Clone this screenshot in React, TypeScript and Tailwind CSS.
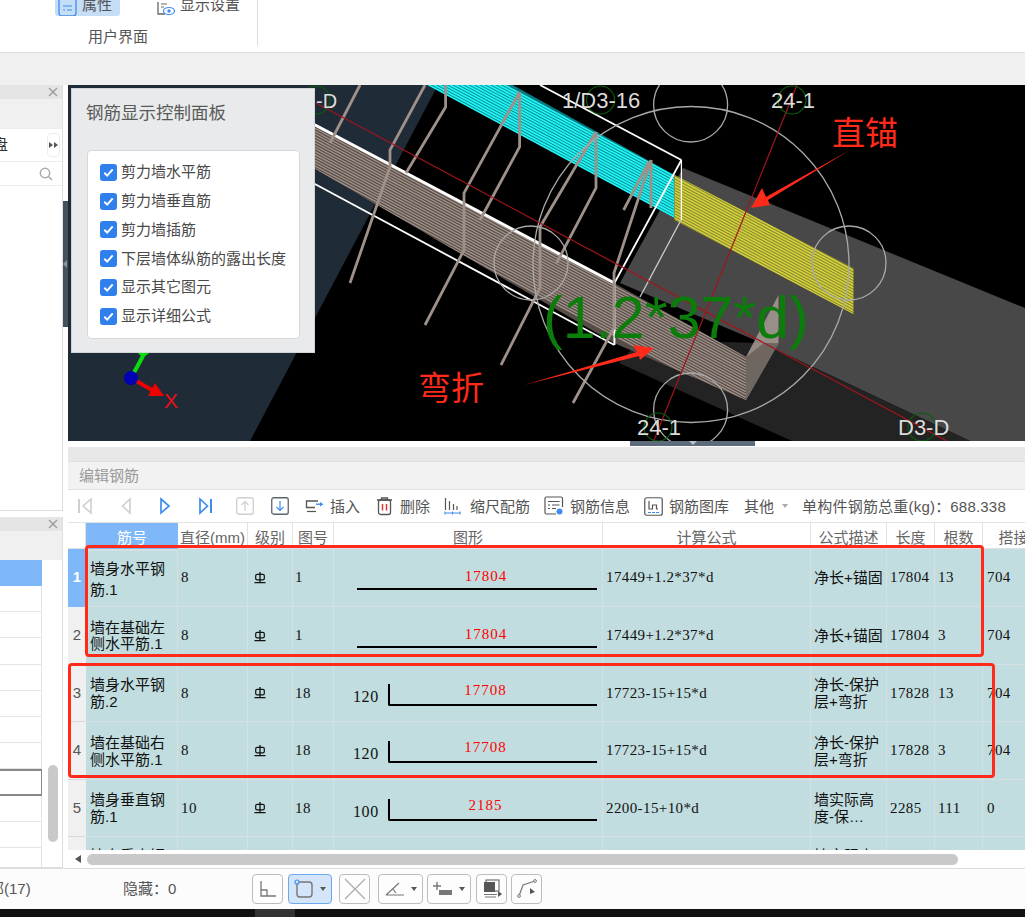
import React from "react";

const SANS = "font-['Liberation_Sans','Noto_Sans_CJK_SC',sans-serif]";
const NUM = "font-['Liberation_Serif','Noto_Sans_CJK_SC',serif]";

function range(n: number) {
  return Array.from({ length: n }, (_, i) => i);
}

function Scene() {
  const slope = 0.537;
  const hatch = (x1: number, x2: number, y1: number, n: number, step: number, color: string, w: number) =>
    range(n).map((i) => (
      <line
        key={i}
        x1={x1}
        y1={y1 + i * step}
        x2={x2}
        y2={y1 + i * step + (x2 - x1) * slope}
        stroke={color}
        strokeWidth={w}
      />
    ));
  const stirrups = [
    "360,85 330,143",
    "425,85 390,150 390,167 350,283",
    "445.6,85 445.6,107 406,173",
    "519.6,92 464,193 464,250 425,325",
    "519.6,92 519.6,147 480,220",
    "596,132 540,227 540,288 501,365",
    "596,132 596,188 556.6,263",
    "651,160 614,273 614,328 573,403",
    "651,160 651,208",
    "623.6,210 649,162",
  ];
  const greenCircles = [
    [316, 100],
    [600.5, 100],
    [792, 100],
    [658, 427],
    [922, 427],
  ];
  const grayCircles = [
    [690.6, 105],
    [690.6, 410],
    [531, 263],
    [849, 263],
  ];
  return (
    <svg viewBox="68 85 957 356" className="block w-full h-full" xmlns="http://www.w3.org/2000/svg">
      <rect x="68" y="85" width="957" height="356" fill="#000" />
      <polygon points="68,85 438,85 250,441 68,441" fill="#1f2b37" />
      <polygon points="683,168 1025,308 1025,441 970,441 762,343 620,283" fill="#484848" />
      <polygon points="619,363 792,441 970,441 762,343 640,340" fill="#232323" />

      {/* cyan bars */}
      <clipPath id="cyanClip">
        <polygon points="512.7,85 674.5,175 674.5,218 427,85" />
      </clipPath>
      <g clipPath="url(#cyanClip)">
        <rect x="420" y="85" width="260" height="140" fill="#067a80" />
        {hatch(400, 680, 29, 40, 2.9, "#22f4f4", 1.8)}
      </g>

      {/* yellow bars */}
      <clipPath id="yellowClip">
        <polygon points="674.5,175 853.4,268 853.4,314 674.5,220" />
      </clipPath>
      <g clipPath="url(#yellowClip)">
        <rect x="670" y="170" width="190" height="150" fill="#807e2e" />
        {hatch(670, 860, 172, 18, 2.9, "#d2d03c", 1.7)}
      </g>

      {/* brown bars */}
      <clipPath id="brownClip">
        <polygon points="300,117 614,283 746,357 746,400 614,343 300,160" />
      </clipPath>
      <g clipPath="url(#brownClip)">
        <rect x="300" y="110" width="450" height="295" fill="#564c48" />
        {hatch(290, 760, 112, 18, 2.9, "#a09188", 1.4)}
      </g>
      <polygon points="746,357 778.5,295 778.5,343 746,400" fill="#a89c95" opacity="0.85" />
      <polygon points="746,357 764,343 778.5,343 746,400" fill="#6f6660" />

      {/* wire box */}
      <g fill="none" stroke="#fff">
        <line x1="540" y1="85" x2="681.4" y2="160" strokeWidth="1.8" />
        <line x1="681.4" y1="160" x2="614.4" y2="283" strokeWidth="1.8" />
        <line x1="300" y1="117" x2="614.4" y2="283" strokeWidth="3" />
        <line x1="300" y1="176" x2="614.4" y2="345" strokeWidth="1.8" />
        <line x1="614.4" y1="283" x2="614.4" y2="345" strokeWidth="2" />
        <line x1="681" y1="220" x2="640" y2="297" strokeWidth="1.3" stroke="#ccc" />
        <line x1="681.4" y1="160" x2="681.4" y2="220" strokeWidth="1.3" />
      </g>

      {/* stirrups */}
      <g fill="none" stroke="#9f9189" strokeWidth="2.8">
        {stirrups.map((p) => (
          <polyline key={p} points={p} />
        ))}
      </g>

      {/* circles */}
      <g fill="none" stroke="#a9a9a9" strokeWidth="1.3">
        <circle cx="691" cy="264.5" r="158" />
        {grayCircles.map(([x, y]) => (
          <circle key={x + "-" + y} cx={x} cy={y} r="37" />
        ))}
      </g>

      {/* axes */}
      <line x1="316" y1="103" x2="947" y2="441" stroke="#a3151c" strokeWidth="1.2" />
      <line x1="797" y1="85" x2="653.7" y2="441" stroke="#a3151c" strokeWidth="1.2" />

      <g fill="none" stroke="#0b5d0b" strokeWidth="1.2">
        {greenCircles.map(([x, y]) => (
          <circle key={x + "-" + y} cx={x} cy={y} r="14" />
        ))}
      </g>

      <g fill="#dcdcdc" fontFamily="'Liberation Sans', sans-serif" fontSize="22">
        <text x="316" y="108" fontSize="20">-D</text>
        <text x="562" y="108">1/D3-16</text>
        <text x="771" y="108">24-1</text>
        <text x="637" y="435">24-1</text>
        <text x="898" y="435">D3-D</text>
      </g>

      <text x="543" y="338" fill="#0a7d0a" fontFamily="'Liberation Sans', sans-serif" fontSize="59">
        (1.2*37*d)
      </text>

      {/* red arrows */}
      <polygon points="850,150 766,197 762,188 751,208 770,205 768,200" fill="#ff2a1a" />
      <polygon points="524,385 637,352 633,345 654,348 640,360 639,356" fill="#ff2a1a" />
      <g fill="#ff2a1a" fontFamily="'Noto Sans CJK SC', sans-serif" fontSize="33">
        <text x="832" y="145">直锚</text>
        <text x="418" y="400">弯折</text>
      </g>

      {/* coordinate triad */}
      <line x1="131" y1="378" x2="143" y2="356" stroke="#0bdc0b" strokeWidth="4" />
      <polygon points="138,353 149,353 143,358" fill="#0bdc0b" />
      <line x1="131" y1="378" x2="152" y2="390" stroke="#f00000" strokeWidth="4" />
      <polygon points="148,396 155,383 164,396" fill="#f00000" />
      <circle cx="131" cy="378" r="7" fill="#0000b4" />
      <text x="164" y="408" fill="#e81018" fontFamily="'Liberation Sans', sans-serif" fontSize="21">X</text>
    </svg>
  );
}

function Check() {
  return (
    <span className="w-[17px] h-[17px] rounded-[3px] bg-[#2f80ed] flex items-center justify-center shrink-0">
      <svg width="13" height="13" viewBox="0 0 13 13">
        <path d="M2.3 6.8 L5.2 9.6 L10.7 3.4" fill="none" stroke="#fff" strokeWidth="2" />
      </svg>
    </span>
  );
}

function ControlPanel() {
  const items = ["剪力墙水平筋", "剪力墙垂直筋", "剪力墙插筋", "下层墙体纵筋的露出长度", "显示其它图元", "显示详细公式"];
  return (
    <div className="absolute left-[3px] top-[3px] w-[244px] h-[265px] bg-[#e8eaeb] border border-[#d2d4d5] pl-[14px]">
      <div className="text-[17.5px] leading-[24px] text-[#5a5a5a] pt-[12px] h-[61px]">钢筋显示控制面板</div>
      <div className="ml-[1px] w-[213px] h-[189px] bg-white border border-[#d8d8d8] rounded-[4px] pt-[7px] pl-[12px]">
        {items.map((t) => (
          <div key={t} className="flex items-center h-[28.8px] gap-[4px] text-[15px] text-[#4a4a4a]">
            <Check />
            <span>{t}</span>
          </div>
        ))}
      </div>
    </div>
  );
}

function NavIcon({ kind }: { kind: number }) {
  const gray = "#cfcfcf";
  const blue = "#3f8cf0";
  if (kind === 0)
    return (
      <svg width="14" height="18" viewBox="0 0 14 18" className="ml-[10px]">
        <path d="M1 2V16" stroke={gray} strokeWidth="2" />
        <path d="M13 2 L5 9 L13 16Z" fill="none" stroke={gray} strokeWidth="1.6" />
      </svg>
    );
  if (kind === 1)
    return (
      <svg width="10" height="18" viewBox="0 0 10 18" className="ml-[29px]">
        <path d="M9 2 L1.5 9 L9 16Z" fill="none" stroke={gray} strokeWidth="1.6" />
      </svg>
    );
  if (kind === 2)
    return (
      <svg width="10" height="18" viewBox="0 0 10 18" className="ml-[29px]">
        <path d="M1 2 L9 9 L1 16Z" fill="none" stroke={blue} strokeWidth="1.7" />
      </svg>
    );
  return (
    <svg width="13" height="18" viewBox="0 0 13 18" className="ml-[29px]">
      <path d="M1 2 L8.5 9 L1 16Z" fill="none" stroke={blue} strokeWidth="1.7" />
      <path d="M12 2V16" stroke={blue} strokeWidth="2" />
    </svg>
  );
}

function Toolbar() {
  const label = "text-[15px] leading-[20px] text-[#555] whitespace-nowrap mt-[2px]";
  return (
    <div className="h-[33px] bg-white flex items-center border-b border-[#e2e2e2]">
      <NavIcon kind={0} />
      <NavIcon kind={1} />
      <NavIcon kind={2} />
      <NavIcon kind={3} />
      <svg width="18" height="18" viewBox="0 0 18 18" className="ml-[24px]">
        <rect x="0.75" y="0.75" width="16.5" height="16.5" rx="2" fill="none" stroke="#cfcfcf" strokeWidth="1.3" />
        <path d="M9 14V4.5M5.5 8 L9 4.5 L12.5 8" fill="none" stroke="#cfcfcf" strokeWidth="1.2" />
      </svg>
      <svg width="18" height="18" viewBox="0 0 18 18" className="ml-[17px]">
        <rect x="0.75" y="0.75" width="16.5" height="16.5" rx="2" fill="none" stroke="#5c6470" strokeWidth="1.3" />
        <path d="M9 4V13.5M5.5 10 L9 13.5 L12.5 10" fill="none" stroke="#3f8cf0" strokeWidth="1.2" />
      </svg>
      <svg width="19" height="16" viewBox="0 0 19 16" className="ml-[16px]">
        <path d="M13 3H1.5V9.5H10" fill="none" stroke="#555" strokeWidth="1.3" />
        <path d="M2 13.5H11" stroke="#555" strokeWidth="1.2" />
        <path d="M11 6.2H15" stroke="#3f8cf0" strokeWidth="1.4" />
        <path d="M15 4L18.5 6.2L15 8.4Z" fill="#3f8cf0" />
      </svg>
      <span className={label + " ml-[6px]"}>插入</span>
      <svg width="17" height="20" viewBox="0 0 17 20" className="ml-[16px]">
        <path d="M1 4H16M5.5 4V2H11.5V4" fill="none" stroke="#555" strokeWidth="1.3" />
        <rect x="2.5" y="4" width="12" height="14.5" rx="2" fill="none" stroke="#555" strokeWidth="1.3" />
        <path d="M6.5 8V14.5M10.5 8V14.5" stroke="#e53935" strokeWidth="1.5" />
      </svg>
      <span className={label + " ml-[7px]"}>删除</span>
      <svg width="17" height="20" viewBox="0 0 17 20" className="ml-[14px]">
        <path d="M1.5 2V14M5.5 5V14M9.5 8V14M13 10V14" stroke="#555" strokeWidth="1.2" />
        <path d="M0.5 17H16.5M1 15.5V18.5M8.5 15.5V18.5M16 15.5V18.5" stroke="#3f8cf0" strokeWidth="1.1" />
      </svg>
      <span className={label + " ml-[9px]"}>缩尺配筋</span>
      <svg width="20" height="20" viewBox="0 0 20 20" className="ml-[14px]">
        <path d="M12 18H2.5A1.5 1.5 0 0 1 1 16.5V2.5A1.5 1.5 0 0 1 2.5 1H17A1.5 1.5 0 0 1 18.5 2.5V11" fill="none" stroke="#555" strokeWidth="1.2" />
        <path d="M4 5.5H15.5M4 9H6M8 9H15.5M4 12.5H6M8 12.5H12" stroke="#555" strokeWidth="1.1" />
        <circle cx="15.5" cy="15.5" r="3" fill="#3f8cf0" />
      </svg>
      <span className={label + " ml-[6px]"}>钢筋信息</span>
      <svg width="19" height="19" viewBox="0 0 19 19" className="ml-[14px]">
        <rect x="0.75" y="0.75" width="17.5" height="17.5" rx="2" fill="none" stroke="#555" strokeWidth="1.2" />
        <path d="M5 4V12H8.5V8H12.5V12H14" fill="none" stroke="#555" strokeWidth="1.2" />
        <path d="M4 15.5H15" stroke="#3f8cf0" strokeWidth="1.2" strokeDasharray="3 1" />
      </svg>
      <span className={label + " ml-[6px]"}>钢筋图库</span>
      <span className={label + " ml-[15px]"}>其他</span>
      <svg width="6" height="4" viewBox="0 0 6 4" className="ml-[8px]">
        <path d="M0 0H6L3 4Z" fill="#aaa" />
      </svg>
      <span className={label + " ml-[14px] tracking-[0.2px]"}>单构件钢筋总重(kg)：688.338</span>
    </div>
  );
}

function HrbSymbol() {
  return (
    <svg width="12" height="12" viewBox="0 0 12 12" className="block">
      <rect x="1.7" y="2.4" width="8.6" height="5.4" rx="1.4" fill="none" stroke="#111" strokeWidth="1.2" />
      <path d="M6 0V10.6M0.5 10.6H11.5" stroke="#111" strokeWidth="1.3" />
    </svg>
  );
}

const GRID =
  "grid grid-cols-[18px_92px_70px_45px_41px_269px_208px_76px_48px_48px_62px] w-[977px]";
const CELL = "border-r border-b border-[#d7e0e0] flex items-center overflow-hidden";

type Row = {
  n: string;
  h: string;
  lh: string;
  name: string[];
  d: string;
  fig: string;
  bend: string;
  num: string;
  formula: string;
  desc: string[];
  len: string;
  count: string;
  lap: string;
};

const rows: Row[] = [
  { n: "1", h: "h-[58px]", lh: "leading-[21px]", name: ["墙身水平钢", "筋.1"], d: "8", fig: "1", bend: "", num: "17804", formula: "17449+1.2*37*d", desc: ["净长+锚固"], len: "17804", count: "13", lap: "704" },
  { n: "2", h: "h-[58px]", lh: "leading-[16px]", name: ["墙在基础左", "侧水平筋.1"], d: "8", fig: "1", bend: "", num: "17804", formula: "17449+1.2*37*d", desc: ["净长+锚固"], len: "17804", count: "3", lap: "704" },
  { n: "3", h: "h-[57px]", lh: "leading-[17px]", name: ["墙身水平钢", "筋.2"], d: "8", fig: "18", bend: "120", num: "17708", formula: "17723-15+15*d", desc: ["净长-保护", "层+弯折"], len: "17828", count: "13", lap: "704" },
  { n: "4", h: "h-[58px]", lh: "leading-[17px]", name: ["墙在基础右", "侧水平筋.1"], d: "8", fig: "18", bend: "120", num: "17708", formula: "17723-15+15*d", desc: ["净长-保护", "层+弯折"], len: "17828", count: "3", lap: "704" },
  { n: "5", h: "h-[57px]", lh: "leading-[17px]", name: ["墙身垂直钢", "筋.1"], d: "10", fig: "18", bend: "100", num: "2185", formula: "2200-15+10*d", desc: ["墙实际高", "度-保…"], len: "2285", count: "111", lap: "0" },
  { n: "6", h: "h-[58px]", lh: "leading-[21px]", name: ["墙身垂直钢", "筋.2"], d: "10", fig: "18", bend: "100", num: "2185", formula: "2200-15+10*d", desc: ["墙实际高", "度-保…"], len: "2285", count: "111", lap: "0" },
];

function Figure({ r }: { r: Row }) {
  const red = NUM + " text-[15px] leading-[16px] tracking-[1px] text-[#ff0000] text-center";
  if (!r.bend) {
    return (
      <div className="w-full pl-[23px] pr-[5px] pt-[2px]">
        <div className={red + " pl-[18px]"}>{r.num}</div>
        <div className="h-[2px] bg-black mt-[4px]" />
      </div>
    );
  }
  return (
    <div className="w-full flex items-end pl-[19px] pr-[5px] pt-[3px]">
      <span className={NUM + " text-[16px] leading-[18px] tracking-[0.6px] text-[#111] w-[35px] shrink-0"}>{r.bend}</span>
      <div className="flex-1 h-[22px] border-l-2 border-b-2 border-black rounded-bl-[2px]">
        <div className={red + " -mt-[2px] pr-[16px]"}>{r.num}</div>
      </div>
    </div>
  );
}

function Table() {
  const numCell = NUM + " text-[15px] tracking-[0.4px] text-[#111]";
  const head = "text-[15px] text-[#666] leading-[20px] text-center pt-[5px] border-r border-b border-[#e2e2e2] whitespace-nowrap overflow-hidden";
  const heads = ["直径(mm)", "级别", "图号", "图形", "计算公式", "公式描述", "长度", "根数", "搭接"];
  return (
    <div className="relative flex-1 min-h-0 flex flex-col">
      <div className={GRID + " h-[26px] shrink-0 bg-white"}>
        <div className="border-r border-b border-[#e2e2e2]" />
        <div className="bg-[#7fb8f8] text-white text-[15px] leading-[20px] text-center pt-[5px]">筋号</div>
        {heads.map((h) => (
          <div key={h} className={head}>{h}</div>
        ))}
      </div>
      <div className="h-[301px] shrink-0 overflow-hidden">
        {rows.map((r) => {
          const first = r.n === "1";
          return (
            <div key={r.n} className={GRID + " " + r.h + " bg-[#c1dddf]"}>
              <div
                className={
                  "flex items-center justify-center text-[15px] border-b " +
                  (first ? "bg-[#7fb8f8] text-white font-bold border-[#7fb8f8]" : "bg-[#f0f0f0] text-[#555] border-[#d8d8d8]")
                }
              >
                {r.n}
              </div>
              <div className={CELL + " text-[15px] text-[#111] " + r.lh + (first ? " pl-[2px] border-2 border-[#777]" : " pl-[4px]")}>
                <div className="whitespace-nowrap">
                  {r.name.map((l) => (
                    <div key={l}>{l}</div>
                  ))}
                </div>
              </div>
              <div className={CELL + " pl-[3px] " + numCell}>{r.d}</div>
              <div className={CELL + " pl-[6px]"}><HrbSymbol /></div>
              <div className={CELL + " pl-[2px] " + numCell}>{r.fig}</div>
              <div className={CELL}><Figure r={r} /></div>
              <div className={CELL + " pl-[3px] " + numCell}>{r.formula}</div>
              <div className={CELL + " pl-[3px] text-[15px] text-[#111] whitespace-nowrap " + (r.n === "6" ? "leading-[21px]" : "leading-[17px]")}>
                <div>
                  {r.desc.map((l) => (
                    <div key={l}>{l}</div>
                  ))}
                </div>
              </div>
              <div className={CELL + " pl-[3px] " + numCell}>{r.len}</div>
              <div className={CELL + " pl-[3px] " + numCell}>{r.count}</div>
              <div className={CELL + " pl-[4px] " + numCell}>{r.lap}</div>
            </div>
          );
        })}
      </div>
      <div className="h-[18px] shrink-0 bg-white flex items-center">
        <svg width="6" height="8" viewBox="0 0 6 8" className="ml-[7px]">
          <path d="M6 0V8L0 4Z" fill="#555" />
        </svg>
        <div className="ml-[6px] w-[871px] h-[11px] rounded-full bg-[#c9c9c9]" />
      </div>
      {/* annotation boxes drawn over the grid */}
      <div className="absolute left-[17px] top-[22px] w-[899px] h-[112px] border-[3px] border-[#ff2a1a] rounded-[4px] pointer-events-none" />
      <div className="absolute left-0 top-[140px] w-[927px] h-[115px] border-[3px] border-[#ff2a1a] rounded-[4px] pointer-events-none" />
    </div>
  );
}

function Close() {
  return (
    <svg width="10" height="10" viewBox="0 0 10 10">
      <path d="M1 1L9 9M9 1L1 9" stroke="#999" strokeWidth="1.3" />
    </svg>
  );
}

function PanelHead() {
  return (
    <>
      <div className="h-[14px] bg-[#e5e5e5] flex items-center justify-end pr-[4px]">
        <Close />
      </div>
      <div className="h-[29px] bg-[#f0f0f0]" />
    </>
  );
}

function LeftColumn() {
  return (
    <div className="w-[63px] shrink-0 flex flex-col">
      <div className="h-[426px] bg-white border-r border-b border-[#dedede] overflow-hidden mb-[6px]">
        <PanelHead />
        <div className="h-[34px] flex items-center justify-between border-t border-b border-[#ececec] pr-[2px]">
          <span className="-ml-[7px] text-[15px] text-[#333]">盘</span>
          <span className="w-[13px] h-[24px] border border-[#eeeeee] rounded-[4px] flex items-center justify-center">
            <svg width="9" height="6" viewBox="0 0 9 6">
              <path d="M0 0L4 3L0 6ZM5 0L9 3L5 6Z" fill="#555" />
            </svg>
          </span>
        </div>
        <div className="h-[24px] flex items-center justify-end pr-[9px] border-b border-[#ececec]">
          <svg width="14" height="14" viewBox="0 0 14 14">
            <circle cx="6" cy="6" r="4.7" fill="none" stroke="#aaa" strokeWidth="1.5" />
            <path d="M9.5 9.5L13 13" stroke="#aaa" strokeWidth="1.6" />
          </svg>
        </div>
      </div>
      <div className="flex-1 min-h-0 bg-white border-r border-[#dedede] border-b overflow-hidden">
        <PanelHead />
        <div className="flex">
          <div className="w-[42px] shrink-0">
            <div className="h-[26px] bg-[#7fb8f8] border-r border-[#7fb8f8]" />
            {range(12).map((i) => (
              <div
                key={i}
                className={
                  "h-[26.2px] border-r " + (i === 7 ? "border-2 border-l-0 border-[#888]" : "border-b border-[#e4e4e4]")
                }
              />
            ))}
          </div>
          <div className="pl-[6px]">
            <div className="mt-[205px] w-[10px] h-[77px] rounded-full bg-[#c9c9c9]" />
          </div>
        </div>
      </div>
    </div>
  );
}

function StatusButton({
  w,
  active,
  ml,
  caret,
  children,
}: {
  w: string;
  active?: boolean;
  ml: string;
  caret?: boolean;
  children: React.ReactNode;
}) {
  return (
    <div
      className={
        "h-[30px] rounded-[4px] border flex items-center justify-center gap-[6px] shrink-0 " +
        w +
        " " +
        ml +
        " " +
        (active ? "bg-[#d4e5fa] border-[#6aa8ef]" : "bg-[#fdfdfd] border-[#bdbdbd]")
      }
    >
      {children}
      {caret && (
        <svg width="6" height="4" viewBox="0 0 6 4">
          <path d="M0 0H6L3 4Z" fill="#555" />
        </svg>
      )}
    </div>
  );
}

function StatusBar() {
  const s = "#777";
  return (
    <div className="h-[40px] bg-[#fcfcfc] flex items-center text-[15px] text-[#555] overflow-hidden">
      <span className="-ml-[11px] w-[134px] shrink-0">部(17)</span>
      <span className="w-[129px] shrink-0 whitespace-nowrap">隐藏：0</span>
      <StatusButton w="w-[31px]" ml="ml-0">
        <svg width="18" height="18" viewBox="0 0 18 18">
          <path d="M2 1V16H17M2 10H8V16" fill="none" stroke={s} strokeWidth="1.3" />
        </svg>
      </StatusButton>
      <StatusButton w="w-[44px]" ml="ml-[5px]" active caret>
        <svg width="20" height="20" viewBox="0 0 20 20">
          <rect x="3" y="3" width="15" height="15" rx="3" fill="none" stroke={s} strokeWidth="1.4" />
          <circle cx="3" cy="3" r="2" fill="#d4e5fa" stroke="#3f8cf0" strokeWidth="1.1" />
        </svg>
      </StatusButton>
      <StatusButton w="w-[31px]" ml="ml-[7px]">
        <svg width="24" height="24" viewBox="0 0 24 24">
          <path d="M2 2L22 22M22 2L2 22" stroke="#aaa" strokeWidth="1.2" />
        </svg>
      </StatusButton>
      <StatusButton w="w-[45px]" ml="ml-[8px]" caret>
        <svg width="20" height="18" viewBox="0 0 20 18">
          <path d="M1 15H19M1 15L14 3M8 9L11 13" fill="none" stroke={s} strokeWidth="1.2" />
        </svg>
      </StatusButton>
      <StatusButton w="w-[44px]" ml="ml-[4px]" caret>
        <svg width="20" height="18" viewBox="0 0 20 18">
          <path d="M4 2V10M0 6H8" stroke={s} strokeWidth="1.4" />
          <rect x="6" y="10" width="13" height="5" fill={s} />
        </svg>
      </StatusButton>
      <StatusButton w="w-[31px]" ml="ml-[5px]">
        <svg width="20" height="20" viewBox="0 0 20 20">
          <rect x="4" y="1" width="13" height="11" fill="none" stroke="#555" />
          <rect x="2" y="3" width="11" height="10" fill="#555" />
          <path d="M2 15.5H15M3 18H14" stroke="#777" strokeWidth="1.2" />
          <path d="M16 12L20 15L16 18Z" fill="#555" />
        </svg>
      </StatusButton>
      <StatusButton w="w-[31px]" ml="ml-[4px]">
        <svg width="20" height="20" viewBox="0 0 20 20">
          <path d="M2 17L6 6L18 2" fill="none" stroke={s} strokeWidth="1.2" />
          <circle cx="2" cy="17" r="1.4" fill="#fff" stroke={s} />
          <circle cx="18" cy="2" r="1.4" fill="#fff" stroke={s} />
          <path d="M13 9L18 13L13 15Z" fill="#555" />
        </svg>
      </StatusButton>
    </div>
  );
}

function Ribbon() {
  return (
    <div className="h-[53px] bg-white border-b border-[#dddddd] flex shrink-0">
      <div className="w-[258px] h-[46px] border-r border-[#dddddd] flex flex-col">
        <div className="h-[16px] flex text-[15px] text-[#555]">
          <div className="ml-[55px] w-[65px] h-[16px] bg-[#c5ddf5] rounded-b-[3px] flex items-end overflow-hidden pl-[3px] gap-[5px]">
            <svg width="19" height="30" viewBox="0 0 19 30" className="shrink-0 mb-[-1px]">
              <rect x="1" y="1" width="17" height="28" rx="3" fill="none" stroke="#3f8cf0" strokeWidth="1.3" />
              <path d="M5 19H14M5 23H7M9 23H14" stroke="#3f8cf0" strokeWidth="1.1" />
            </svg>
            <span className="leading-[22px] whitespace-nowrap">属性</span>
          </div>
          <div className="ml-[36px] h-[16px] flex items-end overflow-hidden gap-[5px]">
            <svg width="19" height="14" viewBox="0 0 19 14" className="shrink-0">
              <path d="M2 0V12H9" fill="none" stroke="#666" strokeWidth="1.3" />
              <path d="M5 2H11M5 5H8" stroke="#666" strokeWidth="1.1" />
              <ellipse cx="13" cy="9" rx="5.5" ry="3.5" fill="none" stroke="#3f8cf0" strokeWidth="1.2" />
              <circle cx="13" cy="9" r="1.7" fill="#3f8cf0" />
            </svg>
            <span className="leading-[22px] whitespace-nowrap">显示设置</span>
          </div>
        </div>
        <div className="pl-[88px] mt-[10px] text-[15px] leading-[22px] text-[#555]">用户界面</div>
      </div>
    </div>
  );
}

export default function App() {
  return (
    <div className={"w-[1025px] h-[917px] overflow-hidden flex flex-col bg-[#f0f0f0] " + SANS} lang="zh-CN">
      <Ribbon />
      <div className="h-[32px] shrink-0 bg-[#f0f0f0]" />
      <div className="h-[783px] shrink-0 flex bg-white">
        <LeftColumn />
        <div className="w-[5px] shrink-0 bg-white">
          <div className="mt-[116px] h-[126px] bg-[#44525f] flex items-center">
            <svg width="4" height="8" viewBox="0 0 4 8">
              <path d="M4 0V8L0 4Z" fill="#8a96a2" />
            </svg>
          </div>
        </div>
        <div className="flex-1 min-w-0 flex flex-col overflow-hidden">
          <div className="relative h-[356px] shrink-0">
            <Scene />
            <ControlPanel />
          </div>
          <div className="h-[6px] shrink-0 bg-white">
            <div className="ml-[562px] w-[125px] h-[5px] bg-[#5d6b7a] flex justify-center">
              <svg width="8" height="4" viewBox="0 0 8 4">
                <path d="M0 0H8L4 4Z" fill="#b8c2cc" />
              </svg>
            </div>
          </div>
          <div className="h-[15px] shrink-0 bg-[#e8e8e8] border-b border-[#e0e0e0]" />
          <div className="h-[28px] shrink-0 bg-[#f2f2f2] border-b border-[#e2e2e2] pl-[11px] text-[15px] leading-[28px] text-[#999]">
            编辑钢筋
          </div>
          <Toolbar />
          <Table />
        </div>
      </div>
      <div className="border-t border-[#dddddd]" />
      <StatusBar />
      <div className="flex-1 bg-[#111] flex">
        <div className="ml-[255px] w-[40px] bg-[#333]" />
      </div>
    </div>
  );
}
